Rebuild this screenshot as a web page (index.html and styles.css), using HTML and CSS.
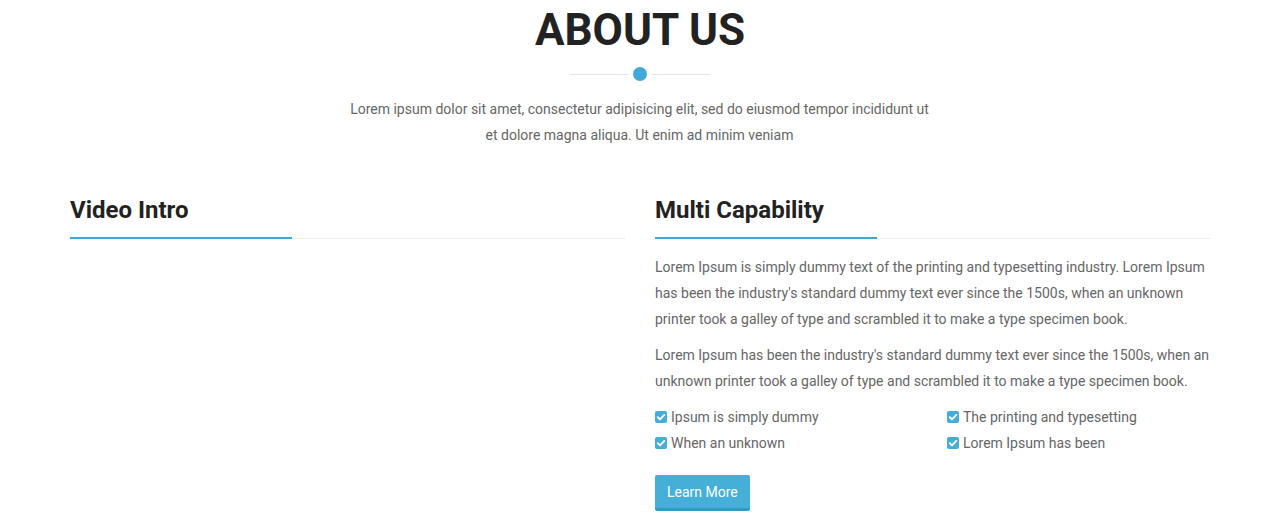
FILE: index.html
```html
<!DOCTYPE html>
<html>
<head>
<meta charset="utf-8">
<link rel="stylesheet" href="styles.css">
</head>
<body>
<section class="about">
  <header class="about-head">
    <h1 class="title">ABOUT US</h1>
    <div class="divider"><span class="line"></span><span class="dot"></span><span class="line"></span></div>
    <p class="lead">Lorem ipsum dolor sit amet, consectetur adipisicing elit, sed do eiusmod tempor incididunt ut et dolore magna aliqua. Ut enim ad minim veniam</p>
  </header>
  <div class="cols">
    <div class="col">
      <h2 class="col-title">Video Intro</h2>
      <div class="rule"><span class="rule-accent"></span></div>
    </div>
    <div class="col">
      <h2 class="col-title">Multi Capability</h2>
      <div class="rule"><span class="rule-accent"></span></div>
      <p class="text">Lorem Ipsum is simply dummy text of the printing and typesetting industry. Lorem Ipsum has been the industry's standard dummy text ever since the 1500s, when an unknown printer took a galley of type and scrambled it to make a type specimen book.</p>
      <p class="text">Lorem Ipsum has been the industry's standard dummy text ever since the 1500s, when an unknown printer took a galley of type and scrambled it to make a type specimen book.</p>
      <ul class="checks">
        <li><svg class="chk" viewBox="0 0 12 12"><rect x="0" y="0" width="12" height="12" rx="2" fill="#45aed8"/><path d="M2.8 6.2 L5 8.3 L9.3 3.9" fill="none" stroke="#fff" stroke-width="1.9" stroke-linecap="round" stroke-linejoin="round"/></svg>Ipsum is simply dummy</li>
        <li><svg class="chk" viewBox="0 0 12 12"><rect x="0" y="0" width="12" height="12" rx="2" fill="#45aed8"/><path d="M2.8 6.2 L5 8.3 L9.3 3.9" fill="none" stroke="#fff" stroke-width="1.9" stroke-linecap="round" stroke-linejoin="round"/></svg>The printing and typesetting</li>
        <li><svg class="chk" viewBox="0 0 12 12"><rect x="0" y="0" width="12" height="12" rx="2" fill="#45aed8"/><path d="M2.8 6.2 L5 8.3 L9.3 3.9" fill="none" stroke="#fff" stroke-width="1.9" stroke-linecap="round" stroke-linejoin="round"/></svg>When an unknown</li>
        <li><svg class="chk" viewBox="0 0 12 12"><rect x="0" y="0" width="12" height="12" rx="2" fill="#45aed8"/><path d="M2.8 6.2 L5 8.3 L9.3 3.9" fill="none" stroke="#fff" stroke-width="1.9" stroke-linecap="round" stroke-linejoin="round"/></svg>Lorem Ipsum has been</li>
      </ul>
      <a class="btn" href="#">Learn More</a>
    </div>
  </div>
</section>
</body>
</html>
```

FILE: styles.css
```css
* { box-sizing: border-box; }
html, body { margin: 0; padding: 0; background: #fff; }
body {
  font-family: Roboto, "Liberation Sans", Arial, sans-serif;
  font-size: 14px;
  line-height: 26px;
  color: #666;
  overflow: hidden;
}
.about { padding: 0 68px 0 70px; }
.about-head {
  display: flex;
  flex-direction: column;
  align-items: center;
  text-align: center;
}
.title {
  margin: 5px 0 0;
  font-size: 44px;
  line-height: 51px;
  font-weight: 700;
  color: #222;
}
.divider {
  display: flex;
  align-items: center;
  gap: 5px;
  margin-top: 11px;
}
.divider .line { width: 58px; height: 1px; background: #e4e4e4; }
.divider .dot { width: 14px; height: 14px; border-radius: 50%; background: #41a9d7; }
.lead {
  margin: 15px 1px 0 0;
  max-width: 590px;
}
.cols {
  display: grid;
  grid-template-columns: 555px 555px;
  column-gap: 30px;
  margin-top: 47px;
}
.col-title {
  margin: 0;
  font-size: 24px;
  line-height: 30px;
  font-weight: 700;
  color: #222;
}
.rule {
  margin-top: 13px;
  height: 1px;
  background: #ececec;
  position: relative;
}
.rule-accent {
  position: absolute;
  left: 0;
  top: -1px;
  width: 222px;
  height: 2px;
  background: #3ba8d6;
}
.text { margin: 15px 0 0; }
.text + .text { margin-top: 10px; }
.checks {
  list-style: none;
  margin: 10px 0 0;
  padding: 0;
  display: grid;
  grid-template-columns: 292px 1fr;
}
.checks li { display: flex; align-items: center; }
.chk { width: 12px; height: 12px; margin-right: 4px; flex: none; }
.btn {
  display: inline-block;
  margin-top: 19px;
  padding: 4px 12px 3px;
  background: #45afd8;
  color: #fff;
  text-decoration: none;
  border-radius: 2px;
  border-bottom: 3px solid #2f9cc6;
  line-height: 26px;
}
```
